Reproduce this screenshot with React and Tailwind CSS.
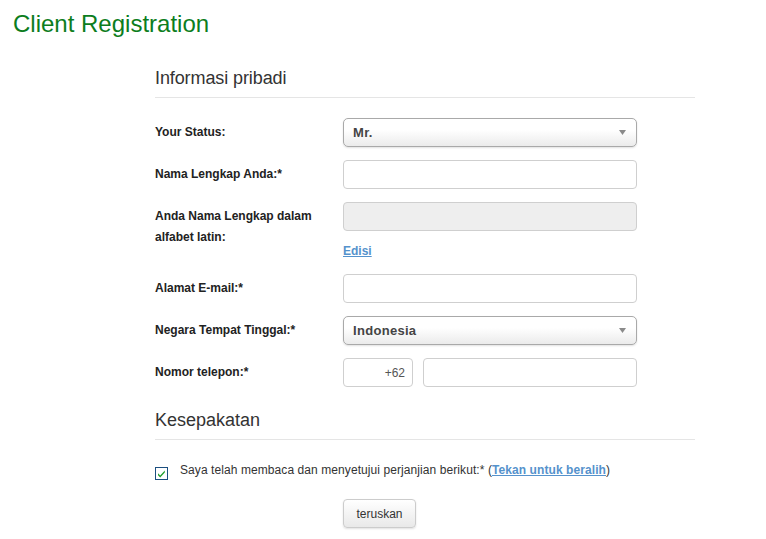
import React from "react";

function Arrow() {
  return (
    <svg width="7" height="5" viewBox="0 0 7 5" className="shrink-0">
      <polygon points="0,0 7,0 3.5,5" fill="#8a8a8a" />
    </svg>
  );
}

function Select({ value }) {
  return (
    <div className="h-[29px] w-[294px] rounded-[5px] border border-[#a9a9a9] bg-linear-to-b from-white from-40% to-[#ebebeb] shadow-[0_1px_2px_rgba(0,0,0,0.12)] flex items-center justify-between pl-[9px] pr-[10px] text-[13px] font-bold text-[#444] tracking-[0.3px]">
      <span>{value}</span>
      <Arrow />
    </div>
  );
}

function TextInput({ disabled, className = "" }) {
  return (
    <div
      className={
        "h-[29px] rounded-[4px] border border-[#cfcfcf] " +
        (disabled ? "bg-[#eeeeee] " : "bg-white ") +
        className
      }
    />
  );
}

function Row({ label, children }) {
  return (
    <div className="flex">
      <div className="w-[188px] shrink-0 pt-[4px] text-[12px] leading-[21px] font-bold text-[#222]">
        {label}
      </div>
      <div className="w-[294px]">{children}</div>
    </div>
  );
}

function Check() {
  return (
    <svg width="13" height="13" viewBox="0 0 13 13" className="shrink-0">
      <rect x="0.5" y="0.5" width="12" height="12" fill="#fff" stroke="#1c4f80" />
      <path d="M3 6.3 L5.2 8.6 L9.8 3.6 L9.8 5.6 L5.2 10.4 L3 8.2 Z" fill="#1f9e2a" />
    </svg>
  );
}

export default function App() {
  return (
    <div className="w-[766px] min-h-[539px] bg-white font-['Liberation_Sans',Arial,sans-serif] text-[#333]">
      <h1 className="pl-[13px] pt-[10px] text-[24px] leading-[28px] text-[#0c7d20]">
        Client Registration
      </h1>
      <div className="ml-[155px] w-[540px]">
        <h2 className="mt-[28px] pb-[7px] border-b border-[#e5e5e5] text-[18px] leading-[24px] text-[#333] tracking-[-0.1px]">
          Informasi pribadi
        </h2>
        <div className="mt-[20px] flex flex-col gap-[13px]">
          <Row label="Your Status:">
            <Select value="Mr." />
          </Row>
          <Row label="Nama Lengkap Anda:*">
            <TextInput />
          </Row>
          <Row
            label={
              <>
                Anda Nama Lengkap dalam
                <br />
                alfabet latin:
              </>
            }
          >
            <TextInput disabled />
            <div className="h-[30px] pt-[11px] text-[12px] leading-[18px]">
              <a href="#" className="font-bold text-[#5592cc] underline">
                Edisi
              </a>
            </div>
          </Row>
          <Row label="Alamat E-mail:*">
            <TextInput />
          </Row>
          <Row label="Negara Tempat Tinggal:*">
            <Select value="Indonesia" />
          </Row>
          <Row label="Nomor telepon:*">
            <div className="flex gap-[10px]">
              <div className="h-[29px] w-[70px] rounded-[4px] border border-[#cfcfcf] bg-white flex items-center justify-end pr-[7px] text-[12px] text-[#555]">
                +62
              </div>
              <TextInput className="flex-1" />
            </div>
          </Row>
        </div>
        <h2 className="mt-[21px] pb-[7px] border-b border-[#e5e5e5] text-[18px] leading-[24px] text-[#333]">
          Kesepakatan
        </h2>
        <div className="mt-[21px] flex items-center h-[18px] text-[12px] leading-[18px] text-[#333]">
          <span className="mt-[6px]">
            <Check />
          </span>
          <span className="ml-[12px] tracking-[0.08px]">
            Saya telah membaca dan menyetujui perjanjian berikut:* (
            <a href="#" className="font-bold text-[#5592cc] underline">
              Tekan untuk beralih
            </a>
            )
          </span>
        </div>
        <div className="mt-[20px] ml-[188px]">
          <button className="h-[29px] w-[73px] rounded-[4px] border border-[#cccccc] bg-linear-to-b from-white to-[#e9e9e9] shadow-[0_1px_2px_rgba(0,0,0,0.12)] text-[12px] text-[#333]">
            teruskan
          </button>
        </div>
      </div>
    </div>
  );
}
